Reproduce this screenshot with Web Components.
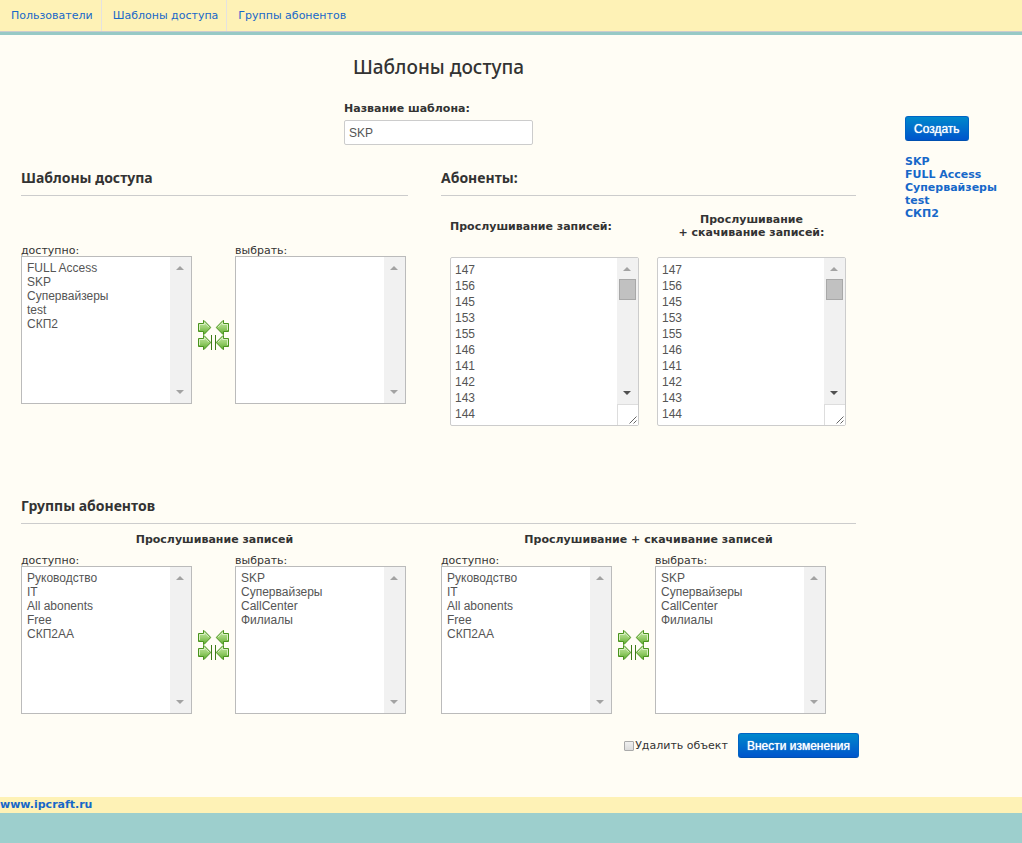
<!DOCTYPE html>
<html lang="ru">
<head>
<meta charset="utf-8">
<meta name="viewport" content="width=device-width, initial-scale=1">
<title>Шаблоны доступа</title>
<style>
  html { background: #9dcfcd; }
  body {
    margin: 0;
    font: 11px/13px "DejaVu Sans", Verdana, sans-serif;
    color: #333;
  }
</style>
</head>
<body>
<access-page></access-page>

<template id="tpl-nav">
  <style>
    :host { display: block; background: #fef2b6; border-bottom: 3px solid #97c9c6; }
    nav { display: flex; border-bottom: 1px solid #ccc; }
    ::slotted(a) {
      padding: 9px 8px 9px 11px;
      border-right: 1px solid #e4e2e0;
      color: #1768c9;
      text-decoration: none;
    }
    ::slotted(a:last-child) { border-right: 0; }
  </style>
  <nav><slot></slot></nav>
</template>

<template id="tpl-list">
  <style>
    :host { display: block; width: 171px; }
    label { display: block; height: 12px; }
    .box {
      display: flex;
      box-sizing: border-box;
      height: 148px;
      border: 1px solid #bbb;
      background: #fff;
    }
    select {
      flex: 1;
      min-width: 0;
      margin: 0;
      padding: 4px 0 0 5px;
      border: 0;
      outline: 0;
      background: none;
      overflow: hidden;
      scrollbar-width: none;
      font: 12px/14px "Liberation Sans", Arial, sans-serif;
      color: #555;
    }
    option { box-sizing: border-box; height: 14px; min-height: 14px; padding: 0; }
    .bar {
      display: flex;
      flex-direction: column;
      width: 21px;
      background: #f1f1f1;
    }
    .track {
      flex: 1;
      display: flex;
      flex-direction: column;
      align-items: center;
      justify-content: space-between;
      padding: 9px 0;
      color: #a3a3a3;
    }
    .track svg { display: block; fill: currentColor; }
    .thumb, .grip { display: none; }

    :host([large]) { width: 189px; }
    :host([large]) label {
      display: flex;
      align-items: center;
      height: 26px;
      margin-bottom: 18px;
      font-weight: bold;
      white-space: pre-line;
      text-align: center;
    }
    :host([large][centered]) label { justify-content: center; }
    :host([large]) .box { height: 169px; border-color: #ccc; border-radius: 2px; }
    :host([large]) select { padding-left: 4px; }
    :host([large]) option { height: 16px; min-height: 16px; padding-top: 1px; }
    :host([large]) .track { justify-content: flex-start; }
    :host([large]) .down { margin-top: auto; color: #505050; }
    :host([large]) .thumb {
      display: block;
      box-sizing: border-box;
      width: 17px;
      height: 21px;
      margin-top: 8px;
      border: 1px solid #a8a8a8;
      background: #c1c1c1;
    }
    :host([large]) .grip {
      display: block;
      box-sizing: border-box;
      height: 21px;
      border: solid #ddd;
      border-width: 1px 0 0 1px;
      background: #fff;
    }
  </style>
  <label for="list"></label>
  <div class="box">
    <select id="list" multiple></select>
    <div class="bar" aria-hidden="true">
      <div class="track">
        <svg width="9" height="4" viewBox="0 0 9 4"><path d="M0 4 4 0 8 4z"/></svg>
        <div class="thumb"></div>
        <svg class="down" width="9" height="4" viewBox="0 0 9 4"><path d="M0 0h8L4 4z"/></svg>
      </div>
      <div class="grip">
        <svg width="20" height="20" viewBox="0 0 20 20"><path d="M11.5 18.500 18.500 11.500M15.500 18.500 18.500 15.500" stroke="#666" fill="none"/></svg>
      </div>
    </div>
  </div>
</template>

<template id="tpl-transfer">
  <style>
    :host { display: flex; }
    .arrows {
      display: grid;
      grid-template-columns: 16px 16px;
      grid-auto-rows: 15px;
      column-gap: 1px;
      align-self: flex-start;
      margin: 76px 5px 0;
    }
    button { display: block; margin: 0; padding: 0; border: 0; background: none; }
    svg { display: block; }
    .left svg { transform: scaleX(-1); }
  </style>
  <slot name="from"></slot>
  <div class="arrows"></div>
  <slot name="to"></slot>
</template>

<template id="tpl-button">
  <style>
    :host { display: block; }
    button {
      display: block;
      margin: 0;
      padding: 5px 8px 4px;
      border: 1px solid #0064c4;
      border-bottom-color: #0050b0;
      border-radius: 3px;
      background: linear-gradient(#0088cc, #0055cc);
      color: #fff;
      font: 12px/14px "Liberation Sans", Arial, sans-serif;
      text-shadow: 0 0 1px #fff;
      white-space: nowrap;
    }
  </style>
  <button type="button"><slot></slot></button>
</template>

<template id="tpl-section">
  <style>
    :host { display: block; }
    h3 {
      margin: 0;
      padding-bottom: 7px;
      border-bottom: 1px solid #ccc;
      font: bold 14px/20px "Noto Sans", "Trebuchet MS", sans-serif;
    }
  </style>
  <section><h3></h3><slot></slot></section>
</template>

<template id="tpl-page">
  <style>
    :host { display: block; }
    .content {
      display: grid;
      grid-template-columns: minmax(0, 1fr) 117px;
      column-gap: 49px;
      padding: 20px 0 39px 21px;
      background: #fffdf5;
    }
    h2 {
      margin: 0;
      font: 500 19px/24px "Noto Sans", "Trebuchet MS", sans-serif;
      text-align: center;
    }
    .name { width: 189px; margin: 23px auto; }
    .name label { display: block; margin-bottom: 5px; font-weight: bold; }
    .name input {
      display: block;
      box-sizing: border-box;
      width: 100%;
      height: 25px;
      margin: 0;
      padding: 0 4px;
      border: 1px solid #ccc;
      border-radius: 2px;
      background: #fff;
      font: 12px "Liberation Sans", Arial, sans-serif;
      color: #555;
    }
    .cols { display: grid; grid-template-columns: 387fr 415fr; column-gap: 33px; }
    .templates { margin-top: 48px; }
    .subscribers { display: flex; gap: 18px; margin: 17px 0 0 9px; }
    .groups { margin-top: 70px; }
    h4 { margin: 9px 0 8px; font-size: 11px; line-height: 13px; text-align: center; }
    .submit {
      display: flex;
      align-items: center;
      justify-content: flex-end;
      gap: 10px;
      margin: 19px -3px 0 0;
    }
    .submit label { display: flex; align-items: center; }
    .submit input {
      appearance: none;
      box-sizing: border-box;
      width: 10px;
      height: 10px;
      margin: 0 1px 0 0;
      border: 1px solid #aaa;
      border-radius: 1px;
      background: linear-gradient(#f0f0f0, #dcdcdc);
    }
    aside a, footer a { color: #1768c9; font-weight: bold; text-decoration: none; }
    aside { padding-top: 61px; }
    ul { margin: 14px 0 0; padding: 0; list-style: none; }
    footer { padding: 1px 0 2px; background: #fef2b6; }
  </style>
  <app-nav>
    <a href="#users">Пользователи</a>
    <a href="#templates">Шаблоны доступа</a>
    <a href="#groups">Группы абонентов</a>
  </app-nav>
  <div class="content">
    <main>
      <h2>Шаблоны доступа</h2>
      <div class="name">
        <label for="name">Название шаблона:</label>
        <input id="name" type="text" value="SKP">
      </div>
      <div class="cols">
        <form-section heading="Шаблоны доступа">
          <transfer-lists class="templates">
            <list-box slot="from" label="доступно:">
              <option>FULL Access</option><option>SKP</option><option>Супервайзеры</option><option>test</option><option>СКП2</option>
            </list-box>
            <list-box slot="to" label="выбрать:"></list-box>
          </transfer-lists>
        </form-section>
        <form-section heading="Абоненты:">
          <div class="subscribers">
            <list-box large label="Прослушивание записей:">
              <option>147</option><option>156</option><option>145</option><option>153</option><option>155</option><option>146</option><option>141</option><option>142</option><option>143</option><option>144</option>
            </list-box>
            <list-box large centered label="Прослушивание&#10;+ скачивание записей:">
              <option>147</option><option>156</option><option>145</option><option>153</option><option>155</option><option>146</option><option>141</option><option>142</option><option>143</option><option>144</option>
            </list-box>
          </div>
        </form-section>
      </div>
      <form-section class="groups" heading="Группы абонентов">
        <div class="cols">
          <div>
            <h4>Прослушивание записей</h4>
            <transfer-lists>
              <list-box slot="from" label="доступно:">
                <option>Руководство</option><option>IT</option><option>All abonents</option><option>Free</option><option>СКП2АА</option>
              </list-box>
              <list-box slot="to" label="выбрать:">
                <option>SKP</option><option>Супервайзеры</option><option>CallCenter</option><option>Филиалы</option>
              </list-box>
            </transfer-lists>
          </div>
          <div>
            <h4>Прослушивание + скачивание записей</h4>
            <transfer-lists>
              <list-box slot="from" label="доступно:">
                <option>Руководство</option><option>IT</option><option>All abonents</option><option>Free</option><option>СКП2АА</option>
              </list-box>
              <list-box slot="to" label="выбрать:">
                <option>SKP</option><option>Супервайзеры</option><option>CallCenter</option><option>Филиалы</option>
              </list-box>
            </transfer-lists>
          </div>
        </div>
      </form-section>
      <div class="submit">
        <label><input type="checkbox">Удалить объект</label>
        <action-button>Внести изменения</action-button>
      </div>
    </main>
    <aside>
      <action-button>Создать</action-button>
      <ul>
        <li><a href="#skp">SKP</a></li>
        <li><a href="#full">FULL Access</a></li>
        <li><a href="#supervisors">Супервайзеры</a></li>
        <li><a href="#test">test</a></li>
        <li><a href="#skp2">СКП2</a></li>
      </ul>
    </aside>
  </div>
  <footer><a href="#ipcraft">www.ipcraft.ru</a></footer>
</template>

<script>
  class TemplateElement extends HTMLElement {
    connectedCallback() {
      if (this.shadowRoot) return;
      const tpl = document.getElementById(this.constructor.template);
      this.attachShadow({ mode: 'open' }).append(document.importNode(tpl.content, true));
      this.ready();
    }
    ready() {}
  }

  class AppNav extends TemplateElement { static template = 'tpl-nav'; }
  class ActionButton extends TemplateElement { static template = 'tpl-button'; }
  class AccessPage extends TemplateElement { static template = 'tpl-page'; }

  class FormSection extends TemplateElement {
    static template = 'tpl-section';
    ready() { this.shadowRoot.querySelector('h3').textContent = this.getAttribute('heading'); }
  }

  class ListBox extends TemplateElement {
    static template = 'tpl-list';
    ready() {
      this.shadowRoot.querySelector('label').textContent = this.getAttribute('label');
      this.shadowRoot.querySelector('select').append(...this.querySelectorAll('option'));
    }
  }

  class TransferLists extends TemplateElement {
    static template = 'tpl-transfer';
    ready() {
      const icon = (all) => `<svg width="16" height="15" viewBox="0 0 16 15">
        <defs><linearGradient id="g" x1="0" y1="0" x2="0" y2="1"><stop offset="0" stop-color="#c4e6a8"/><stop offset=".5" stop-color="#9bd070"/><stop offset="1" stop-color="#5cab2c"/></linearGradient></defs>
        <path d="M1.500 3.500H6.500V.500H7L13.500 7.200V7.800L7 14.500H6.500V11.500H1.500z" fill="url(#g)" stroke="#4a931e"/>
        <path d="M2.500 10V4.500H7.500V2.700L11.800 7" fill="none" stroke="#d8f0c2"/>
        ${all ? '<path d="M14.500 0V15" stroke="#3d7a17"/>' : ''}</svg>`;
      const actions = [
        ['right', 'Добавить', false], ['left', 'Убрать', false],
        ['right', 'Добавить все', true], ['left', 'Убрать все', true],
      ];
      this.shadowRoot.querySelector('.arrows').innerHTML = actions
        .map(([side, name, all]) => `<button type="button" class="${side}" aria-label="${name}">${icon(all)}</button>`)
        .join('');
    }
  }

  customElements.define('app-nav', AppNav);
  customElements.define('action-button', ActionButton);
  customElements.define('form-section', FormSection);
  customElements.define('list-box', ListBox);
  customElements.define('transfer-lists', TransferLists);
  customElements.define('access-page', AccessPage);
</script>
</body>
</html>
